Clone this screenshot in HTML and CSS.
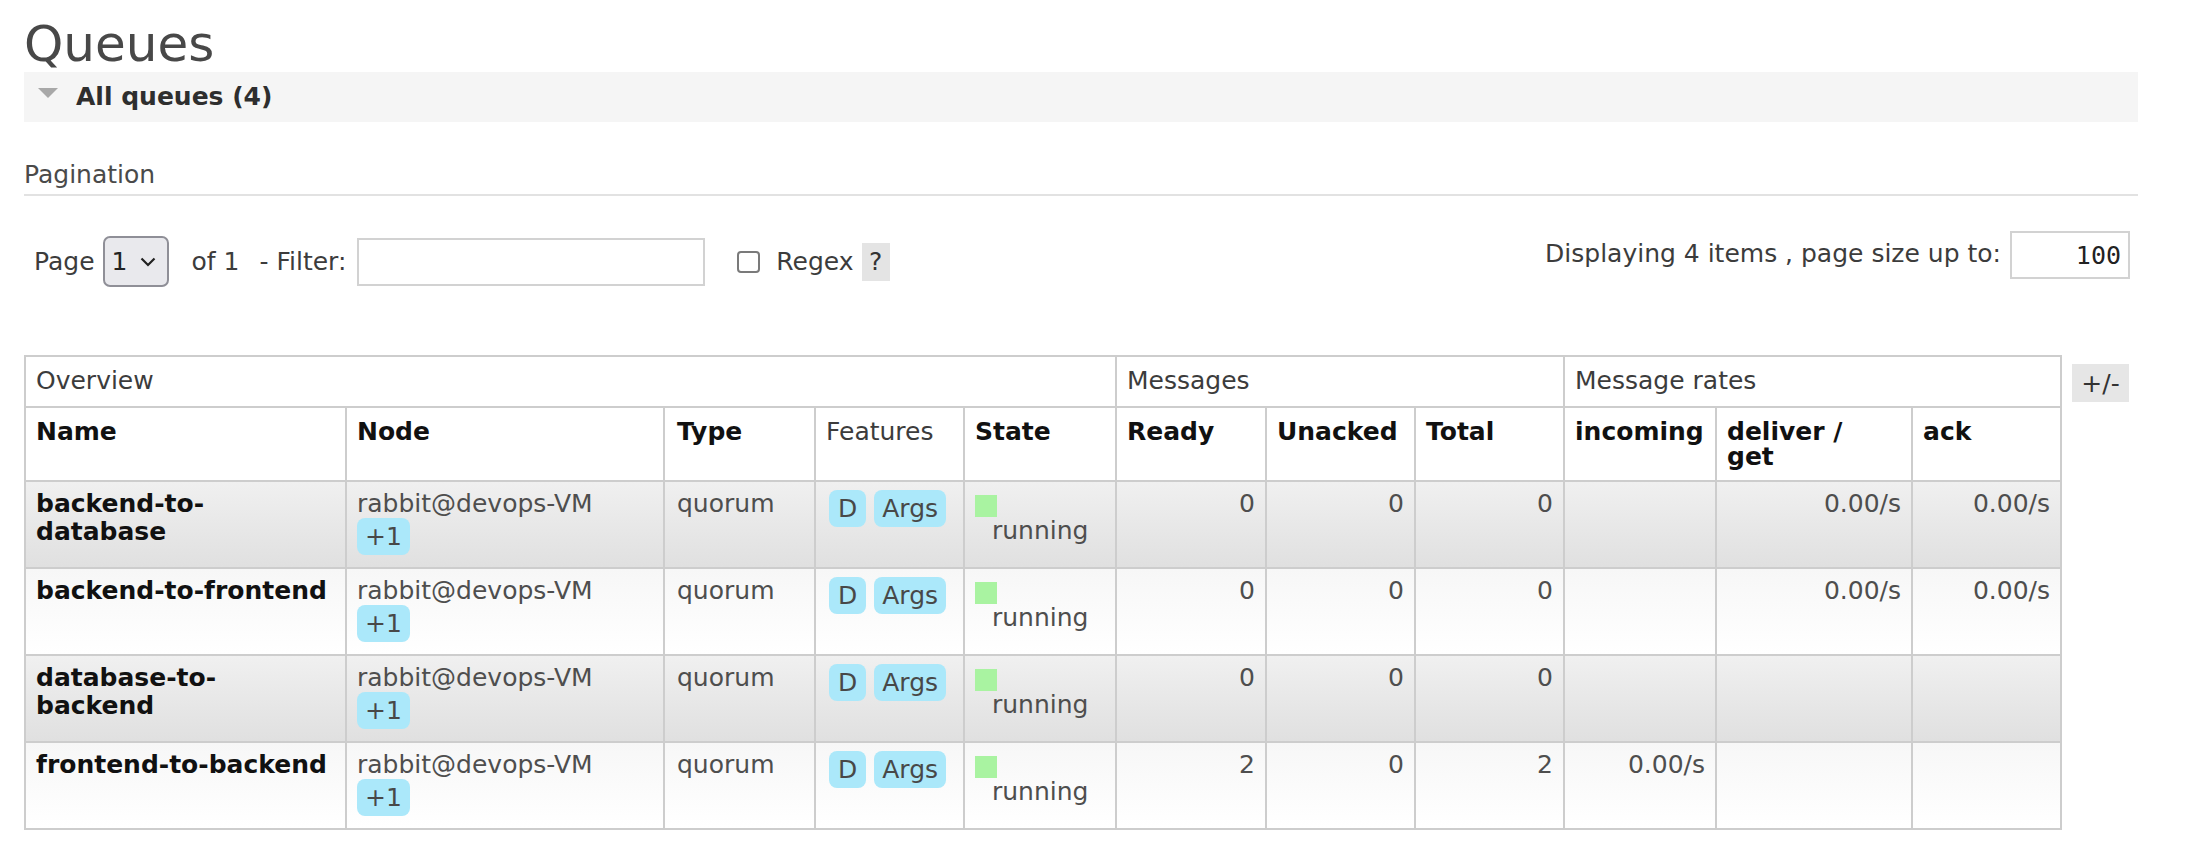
FILE: index.html
```html
<!DOCTYPE html>
<html lang="en">
<head>
<meta charset="utf-8">
<title>Queues</title>
<link rel="stylesheet" href="styles.css">
</head>
<body>
<div class="page">
  <h1 class="title">Queues</h1>
  <div class="section-bar">
    <span class="tri"></span>
    <span class="section-title">All queues (4)</span>
  </div>
  <h3 class="pag-head">Pagination</h3>
  <div class="pager">
    <div class="pager-left">
      <span class="lbl">Page</span>
      <span class="select"><span class="sel-val">1</span><svg class="chev" width="16" height="10" viewBox="0 0 16 10"><polyline points="1.5,1.5 8,8 14.5,1.5" fill="none" stroke="#222" stroke-width="2.2"/></svg></span>
      <span class="lbl of">of 1</span>
      <span class="lbl filter">- Filter:</span>
      <input class="filter-input" type="text">
      <input class="chk" type="checkbox">
      <span class="lbl regex">Regex</span>
      <span class="help">?</span>
    </div>
    <div class="pager-right">
      <span class="lbl disp">Displaying 4 items , page size up to:</span>
      <input class="size-input" type="text" value="100">
    </div>
  </div>
  <div class="table-wrap">
    <table class="list">
      <colgroup>
        <col class="c-name"><col class="c-node"><col class="c-type"><col class="c-feat"><col class="c-state">
        <col class="c-ready"><col class="c-unacked"><col class="c-total">
        <col class="c-in"><col class="c-deliver"><col class="c-ack">
      </colgroup>
      <thead>
        <tr class="group">
          <th colspan="5">Overview</th>
          <th colspan="3">Messages</th>
          <th colspan="3">Message rates</th>
        </tr>
        <tr class="cols">
          <th>Name</th>
          <th>Node</th>
          <th class="type">Type</th>
          <th class="normal">Features</th>
          <th>State</th>
          <th>Ready</th>
          <th>Unacked</th>
          <th>Total</th>
          <th>incoming</th>
          <th>deliver /<br>get</th>
          <th>ack</th>
        </tr>
      </thead>
      <tbody>
        <tr class="alt1">
          <td class="name">backend-to-<br>database</td>
          <td>rabbit@devops-VM<br><span class="badge">+1</span></td>
          <td class="type">quorum</td>
          <td><span class="badge badge-d">D</span> <span class="badge">Args</span></td>
          <td><span class="dot"></span><span class="state-text">running</span></td>
          <td class="num">0</td>
          <td class="num">0</td>
          <td class="num">0</td>
          <td class="num"></td>
          <td class="num">0.00/s</td>
          <td class="num">0.00/s</td>
        </tr>
        <tr class="alt2">
          <td class="name">backend-to-frontend</td>
          <td>rabbit@devops-VM<br><span class="badge">+1</span></td>
          <td class="type">quorum</td>
          <td><span class="badge badge-d">D</span> <span class="badge">Args</span></td>
          <td><span class="dot"></span><span class="state-text">running</span></td>
          <td class="num">0</td>
          <td class="num">0</td>
          <td class="num">0</td>
          <td class="num"></td>
          <td class="num">0.00/s</td>
          <td class="num">0.00/s</td>
        </tr>
        <tr class="alt1">
          <td class="name">database-to-<br>backend</td>
          <td>rabbit@devops-VM<br><span class="badge">+1</span></td>
          <td class="type">quorum</td>
          <td><span class="badge badge-d">D</span> <span class="badge">Args</span></td>
          <td><span class="dot"></span><span class="state-text">running</span></td>
          <td class="num">0</td>
          <td class="num">0</td>
          <td class="num">0</td>
          <td class="num"></td>
          <td class="num"></td>
          <td class="num"></td>
        </tr>
        <tr class="alt2">
          <td class="name">frontend-to-backend</td>
          <td>rabbit@devops-VM<br><span class="badge">+1</span></td>
          <td class="type">quorum</td>
          <td><span class="badge badge-d">D</span> <span class="badge">Args</span></td>
          <td><span class="dot"></span><span class="state-text">running</span></td>
          <td class="num">2</td>
          <td class="num">0</td>
          <td class="num">2</td>
          <td class="num">0.00/s</td>
          <td class="num"></td>
          <td class="num"></td>
        </tr>
      </tbody>
    </table>
    <span class="plusminus">+/-</span>
  </div>
</div>
</body>
</html>
```

FILE: styles.css
```css
* { box-sizing: border-box; }

html, body {
  margin: 0;
  padding: 0;
  background: #fff;
}

body {
  font-family: "DejaVu Sans", Verdana, sans-serif;
  font-size: 25px;
  color: #484848;
}

.page {
  padding: 16px 50px 0 24px;
}

.title {
  margin: 0;
  font-size: 50px;
  font-weight: normal;
  line-height: 56px;
  color: #484848;
}

.section-bar {
  display: flex;
  align-items: flex-start;
  height: 50px;
  background: #f5f5f5;
}

.tri {
  width: 0;
  height: 0;
  margin: 16px 18px 0 14px;
  border-left: 10px solid transparent;
  border-right: 10px solid transparent;
  border-top: 10px solid #a8a8a8;
}

.section-title {
  font-weight: bold;
  line-height: 50px;
  color: #2e2e2e;
}

.pag-head {
  margin: 38px 0 0;
  padding-bottom: 5px;
  font-size: 25px;
  font-weight: normal;
  line-height: 29px;
  color: #4a4a4a;
  border-bottom: 2px solid #e2e2e2;
}

.pager {
  display: flex;
  justify-content: space-between;
  align-items: flex-start;
  margin-top: 35px;
  padding: 0 8px 0 10px;
}

.pager-left {
  display: flex;
  align-items: center;
  height: 51px;
  margin-top: 5px;
}

.pager-right {
  display: flex;
  align-items: center;
  height: 48px;
}

.lbl {
  line-height: 29px;
  white-space: nowrap;
  color: #3c3c3c;
}

.disp {
  margin-bottom: 4px;
}

.select {
  display: inline-flex;
  align-items: center;
  width: 66px;
  height: 51px;
  margin-left: 8px;
  padding-left: 7px;
  background: #e9e9ed;
  border: 2px solid #8f8f97;
  border-radius: 7px;
  color: #222;
}

.chev { margin-left: 13px; }

.of { margin-left: 23px; }
.filter { margin-left: 20px; }

.filter-input {
  width: 348px;
  height: 48px;
  margin: 0 0 0 11px;
  padding: 0;
  border: 2px solid #d2d2d2;
  background: #fff;
}

.chk {
  appearance: none;
  -webkit-appearance: none;
  width: 23px;
  height: 22px;
  margin: 0 0 0 32px;
  border: 2px solid #7a7a7a;
  border-radius: 4px;
  background: #fff;
}

.regex { margin-left: 16px; }

.help {
  display: inline-flex;
  align-items: center;
  justify-content: center;
  width: 28px;
  height: 38px;
  margin-left: 8px;
  background: #e4e4e4;
  color: #333;
}

.size-input {
  width: 120px;
  height: 48px;
  margin: 0 0 0 9px;
  padding: 0 7px 0 0;
  border: 2px solid #d2d2d2;
  background: #fff;
  text-align: right;
  font-family: "DejaVu Sans Mono", monospace;
  font-size: 25px;
  color: #222;
}

.table-wrap {
  display: flex;
  align-items: flex-start;
  margin-top: 68px;
}

.list {
  table-layout: fixed;
  width: 2038px;
  border-collapse: separate;
  border-spacing: 0;
  border-top: 2px solid #cdcdcd;
  border-left: 2px solid #cdcdcd;
}

.c-name { width: 321px; }
.c-node { width: 318px; }
.c-type { width: 151px; }
.c-feat { width: 149px; }
.c-state { width: 152px; }
.c-ready { width: 150px; }
.c-unacked { width: 149px; }
.c-total { width: 149px; }
.c-in { width: 152px; }
.c-deliver { width: 196px; }
.c-ack { width: 149px; }

.list th,
.list td {
  border-right: 2px solid #cdcdcd;
  border-bottom: 2px solid #cdcdcd;
  text-align: left;
  vertical-align: top;
  font-size: 25px;
}

.group th {
  padding: 10px 10px 11px;
  line-height: 28px;
  font-weight: normal;
  color: #3c3c3c;
  background: #fff;
}

.cols th {
  padding: 11px 10px 11px;
  line-height: 25px;
  font-weight: bold;
  color: #111;
  white-space: nowrap;
  background: #fff;
}

.cols th.normal {
  font-weight: normal;
  color: #3c3c3c;
}

.list td {
  padding: 8px 10px 12px;
  line-height: 28px;
  color: #4e4e4e;
}

.list .type {
  padding-left: 12px;
}

.alt1 td { background: linear-gradient(#f0f0f0, #e0e0e0); }
.alt2 td { background: linear-gradient(#f7f7f7, #ffffff); }

.list td.name {
  font-weight: bold;
  color: #111;
}

.list td.num { text-align: right; }

.badge {
  display: inline-block;
  padding: 4px 8px;
  line-height: 29px;
  border-radius: 8px;
  background: #abe8fa;
  color: #484848;
}

.badge-d {
  margin-left: 3px;
  padding: 4px 9px;
}

.dot {
  display: block;
  width: 22px;
  height: 22px;
  margin-top: 5px;
  background: #a9f3a1;
}

.state-text {
  display: block;
  padding-left: 17px;
}

.plusminus {
  display: flex;
  align-items: center;
  justify-content: center;
  width: 57px;
  height: 38px;
  margin: 9px 0 0 10px;
  background: #e6e6e6;
  color: #333;
}
```
